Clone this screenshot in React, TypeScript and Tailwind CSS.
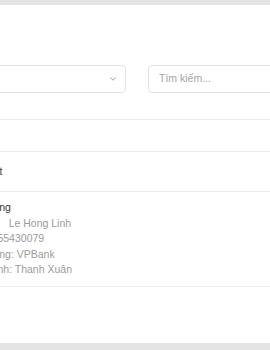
import React from "react";
import { ChevronDown } from "lucide-react";

export default function App() {
  return (
    <div className="h-[350px] w-[270px] overflow-hidden bg-[#e4e4e4] pt-[5px] pb-[7px] font-['Liberation_Sans',Arial,sans-serif]">
      <div className="h-full overflow-hidden bg-white">
        <div className="-ml-[54px] w-[420px]">
          {/* Filters */}
          <div className="flex gap-[22px] pl-[14px] pt-[60px]">
            <div className="flex h-[28px] w-[166px] items-center justify-end rounded-[4px] border border-[#e2e2e2] pr-[7px]">
              <ChevronDown size={10} strokeWidth={2} className="text-[#8a8a8a]" />
            </div>
            <div className="flex h-[28px] w-[180px] items-center rounded-[4px] border border-[#e2e2e2] px-[10px] text-[10.5px] text-[#a3a3a3]">
              Tìm kiếm...
            </div>
          </div>

          {/* Payment methods */}
          <div className="mt-[26px] border-t border-[#ececec]">
            <div className="h-[31px]" />
            <div className="flex h-[40px] items-center border-t border-[#ececec] pl-[16px] text-[10.5px] text-[#444]">
              Tiền mặt
            </div>
            <div className="border-y border-[#ececec] px-[13.5px] py-[8px] text-[10.5px] leading-[15.5px] text-[#9b9b9b]">
              <div className="font-medium text-[#333]">Ngân hàng</div>
              <div>
                <span>Tên TK:</span>
                <span className="ml-[12px]">Le Hong Linh</span>
              </div>
              <div>STK: 0355430079</div>
              <div>Ngân hàng: VPBank</div>
              <div>Chi Nhánh: Thanh Xuân</div>
            </div>
          </div>
        </div>
      </div>
    </div>
  );
}
